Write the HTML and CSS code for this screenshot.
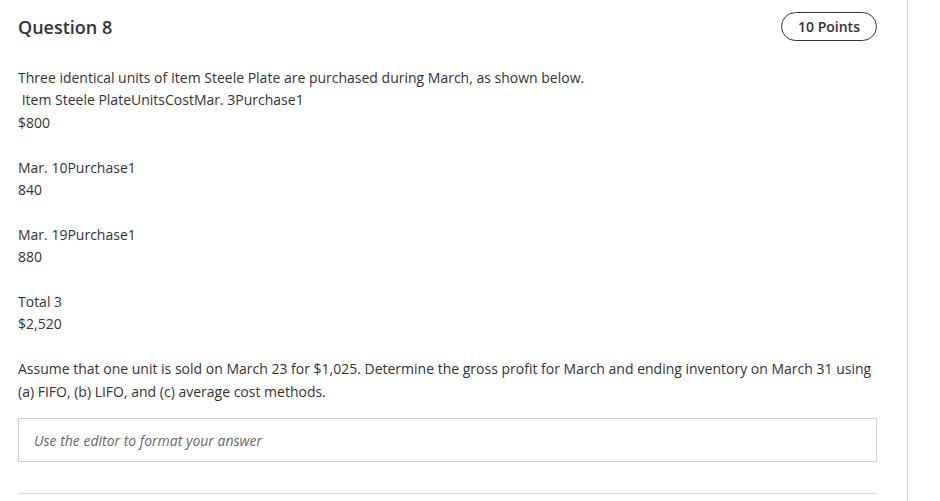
FILE: index.html
```html
<!DOCTYPE html>
<html>
<head>
<meta charset="utf-8">
<link rel="stylesheet" href="styles.css">
</head>
<body>
<div class="page">
  <main class="question">
    <header class="q-head">
      <h1 class="q-title">Question 8</h1>
      <span class="points">10 Points</span>
    </header>
    <div class="q-body">
      <p class="para">Three identical units of Item Steele Plate are purchased during March, as shown below.<br>&nbsp;Item Steele PlateUnitsCostMar. 3Purchase1<br>$800</p>
      <p class="para">Mar. 10Purchase1<br>840</p>
      <p class="para">Mar. 19Purchase1<br>880</p>
      <p class="para">Total 3<br>$2,520</p>
      <p class="para">Assume that one unit is sold on March 23 for $1,025. Determine the gross profit for March and ending inventory on March 31 using (a) FIFO, (b) LIFO, and (c) average cost methods.</p>
    </div>
    <div class="answer">Use the editor to format your answer</div>
    <div class="divider"></div>
  </main>
  <aside class="side"></aside>
</div>
</body>
</html>
```

FILE: styles.css
```css
html, body {
  margin: 0;
  padding: 0;
  background: #fff;
}
body {
  font-family: "Open Sans", "Liberation Sans", sans-serif;
  color: #333;
  width: 940px;
  height: 501px;
  overflow: hidden;
}
.page {
  display: flex;
  height: 501px;
}
.question {
  width: 859px;
  padding: 0 30px 0 18px;
  border-right: 1px solid #d9d9d9;
  height: 501px;
}
.q-head {
  display: flex;
  align-items: center;
  justify-content: space-between;
  padding-top: 12px;
  height: 29px;
}
.q-title {
  margin: 0;
  padding-top: 2px;
  font-size: 18px;
  font-weight: 600;
  color: #333;
  line-height: 29px;
}
.points {
  box-sizing: border-box;
  height: 29px;
  width: 96px;
  border: 1px solid #333;
  border-radius: 15px;
  font-size: 14px;
  font-weight: 600;
  display: flex;
  align-items: center;
  justify-content: center;
  color: #333;
}
.q-body {
  margin-top: 26px;
  font-size: 14px;
  line-height: 22.4px;
}
.para {
  margin: 0 0 22.4px;
}
.para:last-child {
  margin-bottom: 0;
}
.answer {
  box-sizing: border-box;
  margin-top: 15px;
  height: 44px;
  border: 1px solid #cfcfcf;
  padding: 0 15px;
  display: flex;
  align-items: center;
  font-size: 14px;
  font-style: italic;
  color: #666;
}
.divider {
  margin-top: 31px;
  border-top: 1px solid #d9d9d9;
}
```
